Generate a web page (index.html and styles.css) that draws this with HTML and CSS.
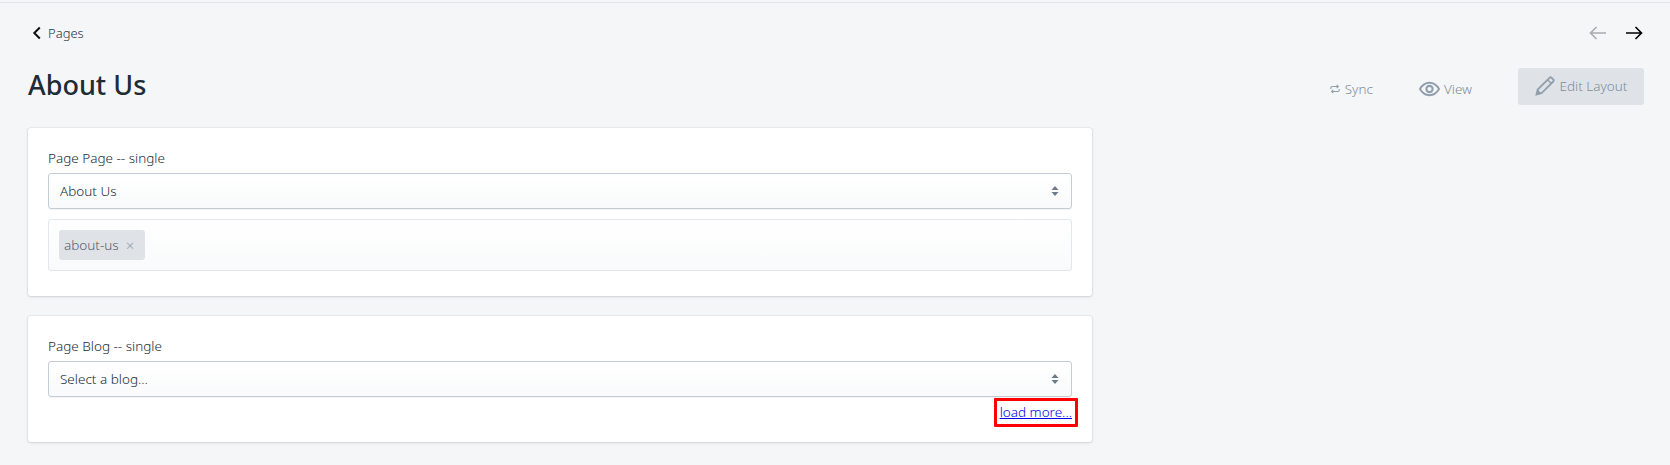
FILE: index.html
```html
<!DOCTYPE html>
<html lang="en">
<head>
<meta charset="utf-8">
<title>About Us</title>
<link rel="stylesheet" href="styles.css">
</head>
<body>
<div class="page">
  <div class="rule"></div>
  <div class="topbar">
    <a class="back">
      <svg class="back-icon" viewBox="0 0 10 14" width="10" height="14"><path d="M7.800 1.500 2.300 7l5.500 5.500" fill="none" stroke="#111" stroke-width="2"/></svg>
      <span>Pages</span>
    </a>
    <div class="arrows">
      <svg viewBox="0 0 18 14" width="18" height="14"><path d="M17 7H1.500M7.500 1 1.500 7l6 6" fill="none" stroke="#a9abae" stroke-width="1.600"/></svg>
      <svg viewBox="0 0 18 14" width="18" height="14"><path d="M1 7h15.500M10.500 1l6 6-6 6" fill="none" stroke="#000" stroke-width="1.600"/></svg>
    </div>
  </div>
  <div class="header">
    <h1>About Us</h1>
    <div class="actions">
      <span class="action sync">
        <svg viewBox="0 0 12 12" width="10" height="10"><path d="M1 6V4.500A1.500 1.500 0 0 1 2.500 3H10M8 1l2 2-2 2M11 6v1.500A1.500 1.500 0 0 1 9.500 9H2M4 11 2 9l2-2" fill="none" stroke="#919eab" stroke-width="1.300"/></svg>
        Sync
      </span>
      <span class="action view">
        <svg viewBox="0 0 22 16" width="21" height="16"><path d="M1 8c2.500-4.300 5.800-6.500 10-6.500S18.500 3.700 21 8c-2.500 4.300-5.800 6.500-10 6.500S3.500 12.300 1 8Z" fill="none" stroke="#919eab" stroke-width="2"/><circle cx="11" cy="8" r="3.300" fill="none" stroke="#919eab" stroke-width="2.200"/></svg>
        View
      </span>
      <span class="edit">
        <svg viewBox="0 0 20 20" width="20" height="20"><path d="M1.500 18.500l1.200-5L14.500 1.800a1.500 1.500 0 0 1 2.100 0l1.600 1.600a1.500 1.500 0 0 1 0 2.100L6.500 17.300l-5 1.200Z" fill="none" stroke="#919eab" stroke-width="1.800"/><path d="M12.500 3.800l3.700 3.700" stroke="#919eab" stroke-width="1.500"/><path d="M1.500 18.500l1.200-5 3.800 3.800Z" fill="#919eab"/></svg>
        Edit Layout
      </span>
    </div>
  </div>
  <div class="cards">
    <section class="card">
      <label class="label">Page Page -- single</label>
      <div class="select">
        <span>About Us</span>
        <svg viewBox="0 0 8 12" width="8" height="12"><path d="M4 1 7.500 5H.5ZM4 11 .5 7h7Z" fill="#6b7a8c"/></svg>
      </div>
      <div class="tagbox"><span class="tag">about-us <i class="x">×</i></span></div>
    </section>
    <section class="card second">
      <label class="label">Page Blog -- single</label>
      <div class="select">
        <span>Select a blog...</span>
        <svg viewBox="0 0 8 12" width="8" height="12"><path d="M4 1 7.500 5H.5ZM4 11 .5 7h7Z" fill="#6b7a8c"/></svg>
      </div>
      <div class="more"><a class="load" href="#">load more...</a></div>
    </section>
  </div>
</div>
</body>
</html>
```
FILE: styles.css
```css
* { box-sizing: border-box; }
html, body { margin: 0; height: 100%; }
body {
  background: #f4f6f8;
  font-family: "Noto Sans", "Open Sans", sans-serif;
  font-size: 14px;
  color: #212b36;
  overflow: hidden;
}
.page {
  height: 465px;
  padding: 2px 26px 0 28px;
}
.rule {
  height: 1px;
  margin: 0 -26px 0 -28px;
  background: #e3e5e9;
}
.topbar {
  display: flex;
  justify-content: space-between;
  align-items: center;
  height: 24px;
  margin-top: 18px;
}
.back {
  display: flex;
  align-items: center;
  gap: 6px;
  margin-left: 4px;
  font-size: 13px;
  font-weight: 300;
  color: #2b333c;
}
.arrows {
  display: flex;
  gap: 18px;
  margin-right: 1px;
}
.header {
  display: flex;
  justify-content: space-between;
  align-items: flex-start;
  margin-top: 22px;
  height: 61px;
}
h1 {
  margin: 0;
  font-size: 27px;
  font-weight: 500;
  line-height: 36px;
  color: #212b36;
}
.actions {
  display: flex;
  align-items: flex-start;
  margin-top: 1px;
}
.action {
  display: flex;
  align-items: center;
  gap: 5px;
  height: 37px;
  margin-top: 2px;
  font-size: 13.500px;
  font-weight: 300;
  color: #7f8c9a;
}
.sync { margin-right: 46px; }
.view { margin-right: 46px; gap: 4px; }
.edit {
  display: flex;
  align-items: center;
  justify-content: center;
  gap: 5px;
  width: 126px;
  height: 37px;
  background: #dfe3e8;
  border-radius: 3px;
  font-size: 13.500px;
  font-weight: 300;
  color: #7f8c9a;
  padding-bottom: 2px;
}
.cards {
  display: flex;
  flex-direction: column;
  gap: 20px;
  width: 1064px;
}
.card {
  background: #fff;
  border-radius: 3px;
  box-shadow: 0 0 0 1px rgba(63,63,68,.05), 0 1px 3px 0 rgba(63,63,68,.15);
  padding: 21px 20px 25px;
  height: 168px;
}
.card.second { height: 126px; padding-bottom: 0; }
.label {
  display: block;
  font-size: 13.500px;
  font-weight: 300;
  line-height: 18px;
  margin-bottom: 6px;
  color: #212b36;
}
.select {
  display: flex;
  justify-content: space-between;
  align-items: center;
  height: 36px;
  padding: 0 12px 0 11px;
  border: 1px solid #c4cdd5;
  border-radius: 3px;
  background: linear-gradient(#fff, #f9fafb);
  box-shadow: 0 1px 0 0 rgba(22,29,37,.05);
  font-size: 13.500px;
  font-weight: 300;
  color: #212b36;
}
.tagbox {
  margin-top: 10px;
  height: 52px;
  padding: 10px 10px;
  border: 1px solid #e3e6ea;
  border-radius: 3px;
  background: linear-gradient(#fff, #f9fafb);
}
.tag {
  display: inline-flex;
  align-items: center;
  gap: 7px;
  height: 30px;
  padding: 0 11px 0 5px;
  background: #dfe3e8;
  border-radius: 3px;
  font-size: 13.500px;
  font-weight: 300;
  color: #4f5e6d;
}
.x {
  font-style: normal;
  font-size: 15px;
  color: #919eab;
}
.more {
  display: flex;
  justify-content: flex-end;
  margin-top: 1px;
}
.load {
  display: block;
  border: 3px solid #ff0000;
  border-radius: 1px;
  padding: 0 3px;
  margin-right: -6px;
  height: 29px;
  line-height: 23px;
  font-size: 13.500px;
  font-weight: 300;
  color: #0000ee;
  text-decoration: underline;
}
```
